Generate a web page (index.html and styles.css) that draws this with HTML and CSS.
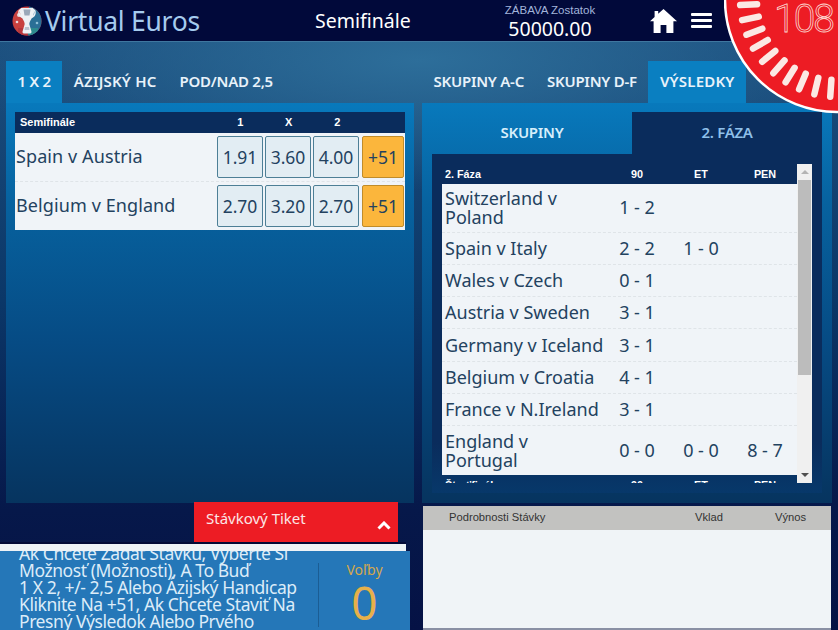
FILE: index.html
```html
<!DOCTYPE html>
<html lang="sk">
<head>
<meta charset="utf-8">
<title>Virtual Euros</title>
<link rel="stylesheet" href="styles.css">
</head>
<body>
<header class="topbar">
  <div class="brand">
    <svg class="logo" viewBox="0 0 30 30" width="30" height="30">
      <defs><clipPath id="lc"><circle cx="15" cy="15" r="14.5"/></clipPath></defs>
      <g clip-path="url(#lc)">
        <rect width="30" height="30" fill="#c8413f"/>
        <rect x="17" width="13" height="30" fill="#2a6f96"/>
        <rect x="6" y="22" width="12" height="8" fill="#b5373c"/>
        <rect x="16" y="22" width="10" height="8" fill="#2d8a8e"/>
        <circle cx="7" cy="9" r="2" fill="#e6d9dc"/>
        <circle cx="5" cy="16" r="1.300" fill="#e6d9dc"/>
        <circle cx="25" cy="17" r="1.300" fill="#8fc0d8"/>
      </g>
      <path d="M9 2h12c1.500 2 1.500 6-.5 9-1 2-3 4-3.200 7l1.700 6c1 2 .5 3.500-1 3.500h-6c-1.500 0-2-1.500-1-3.500l1.700-6c-.2-3-2.200-5-3.200-7-2-3-2-7-.5-9z" fill="#eef1f4"/>
      <path d="M9 3.500c-3 1-3 6 1.500 8M21 3.500c3 1 3 6-1.500 8" fill="none" stroke="#eef1f4" stroke-width="1.400"/>
      <path d="M11.500 3.500h7l-1 6h-5z" fill="#9aa8b8"/>
      <path d="M13 21h4l.5 3h-5z" fill="#b9c3cf"/>
    </svg>
    <span class="brand-name">Virtual Euros</span>
  </div>
  <div class="page-title">Semifinále</div>
  <div class="balance">
    <span class="balance-label">ZÁBAVA Zostatok</span>
    <span class="balance-value">50000.00</span>
  </div>
  <div class="actions">
    <svg class="home" viewBox="0 0 27 24" width="27" height="24"><path d="M13.5 0 27 12.2h-3.6V24h-7V16h-5.800v8h-7V12.2H0L4.600 8V2h3.600v2.700z" fill="#fff"/></svg>
    <div class="burger"><i></i><i></i><i></i></div>
  </div>
</header>

<div class="timer">
  <svg viewBox="0 0 114 116" width="114" height="116">
    <circle cx="113" cy="0" r="112" fill="#ed1c24" stroke="#fff" stroke-width="2.500"/>
    <g stroke="#fbe9e4" stroke-width="6.500" stroke-linecap="round">
      <line x1="16" y1="0" x2="33" y2="0" transform="rotate(-3 113 0)"/>
      <line x1="16" y1="0" x2="33" y2="0" transform="rotate(-12 113 0)"/>
      <line x1="16" y1="0" x2="33" y2="0" transform="rotate(-21 113 0)"/>
      <line x1="16" y1="0" x2="33" y2="0" transform="rotate(-30 113 0)"/>
      <line x1="16" y1="0" x2="33" y2="0" transform="rotate(-39.500 113 0)"/>
      <line x1="16" y1="0" x2="33" y2="0" transform="rotate(-49 113 0)"/>
      <line x1="16" y1="0" x2="33" y2="0" transform="rotate(-58 113 0)"/>
      <line x1="16" y1="0" x2="33" y2="0" transform="rotate(-67 113 0)"/>
      <line x1="16" y1="0" x2="33" y2="0" transform="rotate(-76.500 113 0)"/>
      <line x1="16" y1="0" x2="33" y2="0" transform="rotate(-86 113 0)"/>
    </g>
  </svg>
  <span class="timer-value">108</span>
</div>

<main class="columns">
  <section class="col">
    <nav class="tabs">
      <a class="tab active">1 X 2</a>
      <a class="tab tab-wide">ÁZIJSKÝ HC</a>
      <a class="tab">POD/NAD 2,5</a>
    </nav>
    <div class="panel panel-left">
      <div class="odds-head">
        <span class="odds-title">Semifinále</span>
        <span class="odds-col">1</span><span class="odds-col">X</span><span class="odds-col">2</span>
      </div>
      <div class="odds-body">
        <div class="odds-row">
          <span class="match">Spain v Austria</span>
          <button class="odd">1.91</button><button class="odd">3.60</button><button class="odd">4.00</button><button class="odd more">+51</button>
        </div>
        <div class="odds-row">
          <span class="match">Belgium v England</span>
          <button class="odd">2.70</button><button class="odd">3.20</button><button class="odd">2.70</button><button class="odd more">+51</button>
        </div>
      </div>
    </div>
    <div class="ticket-tab">
      <span class="ticket-label">Stávkový Tiket</span>
      <svg viewBox="0 0 14 9" width="14" height="9"><path d="M1.500 7.500 7 2l5.500 5.500" fill="none" stroke="#fff" stroke-width="3"/></svg>
    </div>
    <div class="ticket-strip"></div>
    <div class="info">
      <div class="info-text">
        <p>Ak Chcete Zadať Stávku, Vyberte Si Možnosť (Možnosti), A To Buď<br>1 X 2, +/- 2,5 Alebo Ázijský Handicap Kliknite Na +51, Ak Chcete Staviť Na Presný Výsledok Alebo Prvého</p>
      </div>
      <div class="picks">
        <span class="picks-label">Voľby</span>
        <span class="picks-value">0</span>
      </div>
    </div>
  </section>

  <section class="col">
    <nav class="tabs">
      <a class="tab">SKUPINY A-C</a>
      <a class="tab">SKUPINY D-F</a>
      <a class="tab tab-wide active">VÝSLEDKY</a>
    </nav>
    <div class="panel panel-right">
      <div class="subtabs">
        <a class="subtab active">SKUPINY</a>
        <a class="subtab">2. FÁZA</a>
      </div>
      <div class="results">
        <div class="scroller">
          <div class="res-head"><span class="res-name">2. Fáza</span><span class="res-col">90</span><span class="res-col">ET</span><span class="res-col">PEN</span></div>
          <div class="res-row res-tall"><span class="res-name">Switzerland v<br>Poland</span><span class="res-col">1 - 2</span><span class="res-col"></span><span class="res-col"></span></div>
          <div class="res-row"><span class="res-name">Spain v Italy</span><span class="res-col">2 - 2</span><span class="res-col">1 - 0</span><span class="res-col"></span></div>
          <div class="res-row"><span class="res-name">Wales v Czech</span><span class="res-col">0 - 1</span><span class="res-col"></span><span class="res-col"></span></div>
          <div class="res-row"><span class="res-name">Austria v Sweden</span><span class="res-col">3 - 1</span><span class="res-col"></span><span class="res-col"></span></div>
          <div class="res-row"><span class="res-name">Germany v Iceland</span><span class="res-col">3 - 1</span><span class="res-col"></span><span class="res-col"></span></div>
          <div class="res-row"><span class="res-name">Belgium v Croatia</span><span class="res-col">4 - 1</span><span class="res-col"></span><span class="res-col"></span></div>
          <div class="res-row"><span class="res-name">France v N.Ireland</span><span class="res-col">3 - 1</span><span class="res-col"></span><span class="res-col"></span></div>
          <div class="res-row res-tall res-last"><span class="res-name">England v<br>Portugal</span><span class="res-col">0 - 0</span><span class="res-col">0 - 0</span><span class="res-col">8 - 7</span></div>
          <div class="res-head"><span class="res-name">Štvrťfinále</span><span class="res-col">90</span><span class="res-col">ET</span><span class="res-col">PEN</span></div>
        </div>
        <div class="scrollbar">
          <span class="arrow arrow-up"></span>
          <span class="thumb"></span>
          <span class="arrow arrow-down"></span>
        </div>
      </div>
    </div>
    <div class="slip">
      <div class="slip-head"><span class="slip-detail">Podrobnosti Stávky</span><span class="slip-stake">Vklad</span><span class="slip-return">Výnos</span></div>
      <div class="slip-body"></div>
    </div>
  </section>
</main>
</body>
</html>
```
FILE: styles.css
```css
* { box-sizing: border-box; }
html, body { margin: 0; height: 630px; }
body {
  width: 838px;
  overflow: hidden;
  position: relative;
  font-family: "Noto Sans", "DejaVu Sans", sans-serif;
  background:
    radial-gradient(ellipse 460px 130px at 420px 60px, #2d6e9a 0%, rgba(45,110,154,0) 100%),
    linear-gradient(180deg, #1c4f7e 42px, #0b3768 300px, #06184a 510px, #051245 630px);
}
.topbar {
  display: grid;
  grid-template-columns: 315px 185px 100px 1fr;
  align-items: center;
  height: 42px;
  background: #01093a;
  border-bottom: 1px solid #3f779f;
}
.brand { display: flex; align-items: center; padding-left: 12px; }
.brand-name { margin-left: 3px; font-size: 26.500px; color: #a5cbee; letter-spacing: -.28px; }
.page-title { font-size: 19.500px; color: #fff; }
.balance { display: flex; flex-direction: column; align-items: center; }
.balance-label { font-family: "Liberation Sans", sans-serif; font-size: 11.500px; line-height: 13px; color: #a3b5da; margin-top: 3px; }
.balance-value { font-size: 19.500px; line-height: 23px; color: #fff; }
.actions { display: flex; align-items: center; padding-left: 50px; gap: 14px; }
.burger { display: flex; flex-direction: column; gap: 2.500px; width: 21px; }
.burger i { display: block; height: 3.500px; background: #fff; border-radius: 1px; }

.timer { position: absolute; top: 0; right: 0; width: 114px; height: 116px; z-index: 5; }
.timer svg { display: block; }
.timer-value {
  position: absolute;
  top: -3px;
  left: 50px;
  font-family: Roboto, "Liberation Sans", sans-serif;
  font-weight: 300;
  font-size: 39px;
  line-height: 44px;
  letter-spacing: -2px;
  color: #ed1c24;
  -webkit-text-stroke: .8px #fcd6ce;
}

.columns { display: flex; gap: 8px; padding: 0 6px; }
.col { width: 409px; }
.col:last-child { width: 410px; margin-left: -1px; }
.tabs { display: flex; height: 42px; margin-top: 19px; }
.tab {
  display: flex;
  align-items: center;
  padding: 0 11.500px 3px;
  font-size: 15px;
  font-weight: 600;
  font-kerning: none;
  letter-spacing: -.25px;
  color: #e8f2fa;
}
.tab-wide { letter-spacing: .2px; }
.tab.active { background: #0a7fc1; }
.panel {
  height: 400px;
  width: 408px;
  background: linear-gradient(180deg, #0879bc 0%, #07629f 25%, #064b84 60%, #06345f 100%);
}
.panel-left { padding: 9px; }
.panel-right { width: 410px; padding: 9px 10px 10px; }

.odds-head {
  display: flex;
  align-items: center;
  height: 21px;
  padding-bottom: 1px;
  background: #0a2c5c;
  color: #fff;
  font-family: "Liberation Sans", sans-serif;
  font-size: 11px;
  font-weight: 700;
}
.odds-title { width: 201px; padding-left: 5px; }
.odds-col { width: 48.500px; text-align: center; }
.odds-body { background: #f0f4f8; }
.odds-row {
  display: flex;
  align-items: center;
  gap: 2px;
  height: 48.500px;
  padding-left: 1px;
  border-bottom: 1px dashed #dfe4e8;
}
.odds-row:last-child { border-bottom: 0; }
.match { width: 199px; padding-bottom: 2px; font-size: 18px; color: #23425f; letter-spacing: .1px; }
.odd {
  width: 46px;
  height: 42px;
  padding: 0;
  border: 1px solid #4d7f96;
  border-radius: 2px;
  background: #e2edf3;
  font-family: inherit;
  font-size: 17.500px;
  color: #23425f;
}
.odd.more { width: 42px; margin-left: 1px; background: #fbb63c; border-color: #c08c2a; }

.ticket-tab {
  display: flex;
  align-items: center;
  justify-content: space-between;
  width: 204px;
  height: 40px;
  margin: -1px 0 0 188px;
  padding: 0 7px 0 12px;
  background: #ed1c24;
  color: #fbe6e6;
  font-size: 15px;
}
.ticket-label { padding-bottom: 9px; }
.ticket-tab svg { margin-top: 6px; }
.ticket-strip {
  width: 406px;
  height: 9px;
  margin-left: -6px;
  background: #edf2f6;
  border-top: 2px solid #020a36;
}
.info {
  display: flex;
  width: 410px;
  height: 79px;
  margin-left: -6px;
  background: #2577b8;
  overflow: hidden;
}
.info-text { width: 319px; padding-left: 19px; border-right: 1px solid #1b5d94; margin: 12px 0 3px; }
.info-text p {
  margin: -18px 0 0;
  font-size: 17.500px;
  line-height: 17px;
  color: #dcecf8;
  letter-spacing: -.43px;
}
.picks { flex: 1; display: flex; flex-direction: column; align-items: center; padding-top: 10px; }
.picks-label { font-size: 14px; line-height: 18px; color: #d6a84c; }
.picks-value { font-size: 46px; line-height: 46px; color: #e7b04a; }

.subtabs { display: flex; height: 42px; }
.subtab {
  display: flex;
  align-items: center;
  justify-content: center;
  padding-bottom: 2px;
  font-size: 15px;
  font-weight: 600;
  letter-spacing: -.3px;
}
.subtab.active { width: 200px; color: #d6eefb; }
.subtab:not(.active) { width: 190px; background: #0a2c5c; color: #8fc0ea; }
.results {
  display: flex;
  height: 339px;
  padding: 10px;
  background: linear-gradient(180deg, #0a2c5c 0%, #0a2c5c 85%, #07386a 100%);
}
.scroller { width: 355px; height: 319px; overflow: hidden; }
.res-head {
  display: flex;
  align-items: center;
  flex: none;
  height: 20px;
  color: #fff;
  font-family: "Liberation Sans", sans-serif;
  font-size: 10.800px;
  font-weight: 700;
}
.res-row {
  display: flex;
  align-items: center;
  height: 32.300px;
  background: #f0f4f8;
  border-bottom: 1px dashed #dfe4e8;
  color: #23425f;
  font-size: 18px;
  line-height: 19px;
}
.res-tall { height: 48.500px; }
.res-last { border-bottom: 0; }
.res-name { width: 163px; padding-left: 3px; flex: none; white-space: nowrap; }
.res-col { width: 64px; flex: none; text-align: center; }
.scrollbar {
  position: relative;
  width: 15px;
  height: 319px;
  background: #f0f0f0;
}
.thumb {
  position: absolute;
  top: 16px;
  left: 1px;
  right: 1px;
  height: 195px;
  background: #bcbcbc;
}
.arrow { position: absolute; left: 3.500px; width: 0; height: 0; border-left: 4px solid transparent; border-right: 4px solid transparent; }
.arrow-up { top: 6px; border-bottom: 4px solid #b4b4b4; }
.arrow-down { bottom: 6px; border-top: 4px solid #505050; }

.slip { width: 408px; height: 124px; margin: 3px 0 0 1px; }
.slip-head {
  display: flex;
  align-items: center;
  height: 24px;
  padding-bottom: 3px;
  background: #c2c2c0;
  color: #333;
  font-family: "Liberation Sans", sans-serif;
  font-size: 11.200px;
}
.slip-detail { width: 272px; padding-left: 26px; flex: none; }
.slip-stake { width: 80px; flex: none; }
.slip-body { height: 98px; background: #f0f4f7; }
.slip::after { content: ""; display: block; height: 2px; background: #8a90a4; }
```
